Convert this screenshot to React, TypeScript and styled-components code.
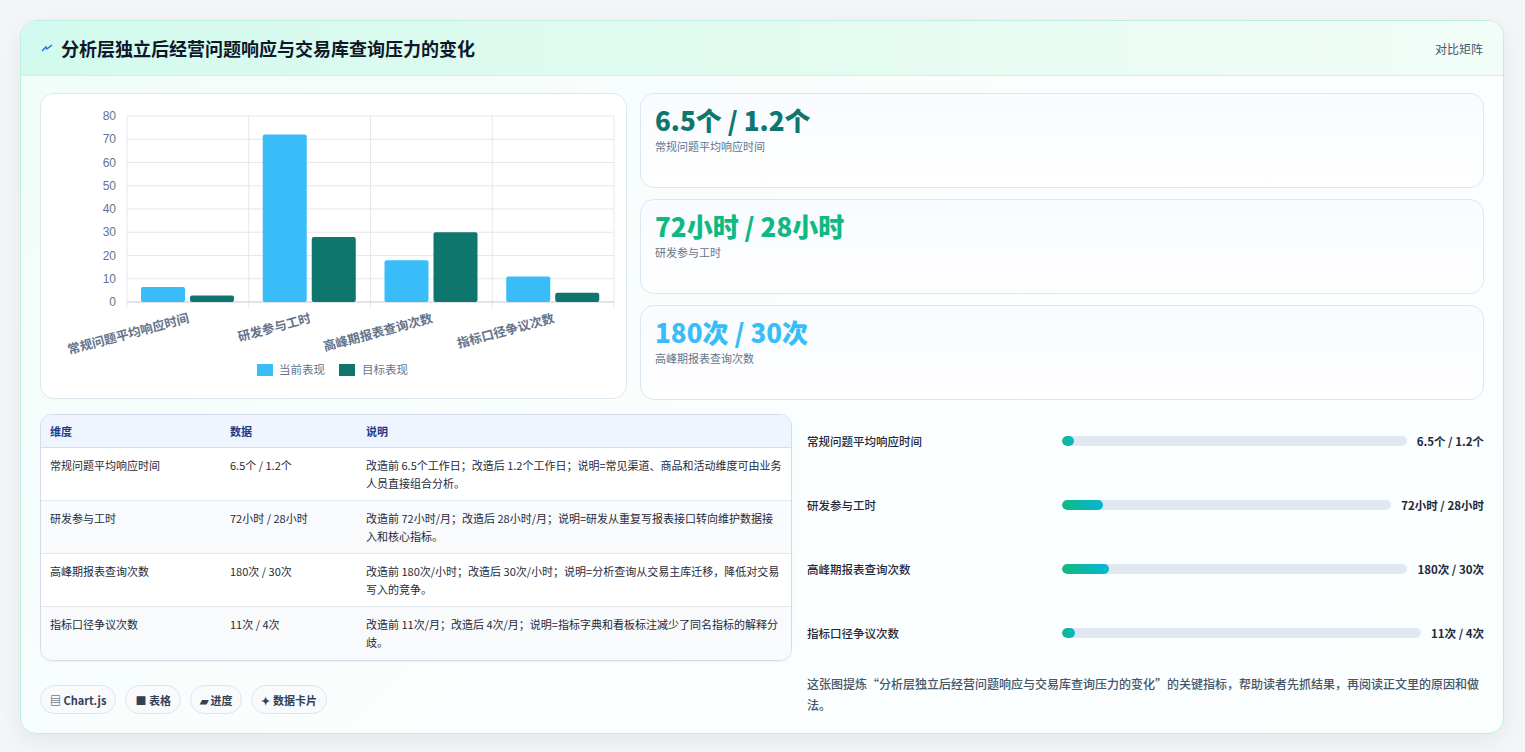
import React from "react";
import styled, { createGlobalStyle } from "styled-components";

const Global = createGlobalStyle`
  html, body { margin: 0; padding: 0; background: #f4f5f6; }
  body { font-family: "Noto Sans CJK SC", "Noto Sans", sans-serif; color: #1e293b; }
  * { box-sizing: border-box; }
`;

const Page = styled.div`
  padding: 20px 21px 22px 20px;
`;
const Shell = styled.div`
  border: 1px solid #bfeee0;
  border-radius: 16px;
  background: linear-gradient(135deg, #f0fdf9 0%, #fbfefe 50%, #fafffe 100%);
  overflow: hidden;
  box-shadow: 0 8px 24px rgba(15, 23, 42, 0.06);
`;
const Header = styled.div`
  height: 55px;
  display: flex;
  align-items: center;
  justify-content: space-between;
  padding: 0 20px 0 20px;
  background: linear-gradient(90deg, #d3faee 0%, #e2fbef 50%, #f2fdf8 100%);
  border-bottom: 1px solid #d5ecf2;
`;
const Title = styled.h1`
  margin: 0;
  font-size: 18px;
  font-weight: 700;
  color: #0f172a;
  display: flex;
  align-items: center;
  gap: 8px;
`;
const Tag = styled.span`
  font-size: 12px;
  color: #475569;
`;
const Body = styled.div`
  padding: 17px 19px 18px 19px;
  display: flex;
  flex-direction: column;
  gap: 14px;
`;
const TopRow = styled.div`
  display: grid;
  grid-template-columns: 587px 1fr;
  gap: 13px;
`;
const ChartCard = styled.div`
  height: 306px;
  background: #fff;
  border: 1px solid #dde7f0;
  border-radius: 14px;
`;
const Stats = styled.div`
  display: flex;
  flex-direction: column;
  gap: 11px;
`;
const StatCard = styled.div`
  height: 95px;
  border: 1px solid #d9e8f3;
  border-radius: 14px;
  background: linear-gradient(180deg, #f8fbff 0%, #ffffff 100%);
  padding: 8px 14px;
`;
const StatValue = styled.div<{ $c: string }>`
  font-size: 26px;
  font-weight: 800;
  color: ${(p) => p.$c};
  line-height: 36px;
`;
const StatLabel = styled.div`
  font-size: 11px;
  color: #64748b;
`;
const BottomRow = styled.div`
  display: grid;
  grid-template-columns: 752px 1fr;
  gap: 11px;
`;
const LeftCol = styled.div`
  display: flex;
  flex-direction: column;
  gap: 24px;
`;
const Table = styled.table`
  width: 100%;
  border-collapse: separate;
  border-spacing: 0;
  border: 1px solid #d3dce8;
  border-radius: 12px;
  overflow: hidden;
  font-size: 11px;
  box-shadow: 0 1px 2px rgba(0,0,0,0.05);
`;
const Th = styled.th<{ $w?: string }>`
  text-align: left;
  font-weight: 700;
  color: #1e3a8a;
  background: #eef5ff;
  padding: 0 9px;
  height: 33px;
  width: ${(p) => p.$w || "auto"};
  border-bottom: 1px solid #d3dce8;
`;
const Tr = styled.tr<{ $alt: boolean }>`
  background: ${(p) => (p.$alt ? "#f8fafc" : "#ffffff")};
  &:not(:last-child) td { border-bottom: 1px solid #e2e8f0; }
`;
const Td = styled.td`
  padding: 8px 9px 7px;
  vertical-align: top;
  color: #1e293b;
  line-height: 18px;
  height: 53px;
`;
const Chips = styled.div`
  display: flex;
  gap: 9px;
`;
const Chip = styled.span`
  height: 29px;
  padding: 0 9px;
  border: 1px solid #dde5ee;
  border-radius: 15px;
  background: #f8fafc;
  font-size: 11px;
  font-weight: 700;
  color: #334155;
  display: inline-flex;
  align-items: center;
  gap: 3px;
`;
const RightCol = styled.div`
  display: flex;
  flex-direction: column;
  margin-top: -5px;
`;
const ProgRow = styled.div`
  height: 64px;
  display: grid;
  grid-template-columns: 245px 1fr auto;
  align-items: center;
  gap: 10px;
  padding: 0 0 0 4px;
  font-size: 11.5px;
  font-weight: 500;
`;
const Track = styled.div`
  height: 10px;
  background: #e2e8f0;
  border-radius: 5px;
  overflow: hidden;
`;
const Fill = styled.div`
  height: 100%;
  border-radius: 5px;
  background: linear-gradient(90deg, #10b981, #06b6d4);
`;
const ProgVal = styled.span`
  font-weight: 700;
  color: #1e293b;
`;
const Note = styled.p`
  margin: 8px 0 0 4px;
  font-size: 12px;
  font-weight: 500;
  color: #475569;
  line-height: 21px;
`;

const cats = ["常规问题平均响应时间", "研发参与工时", "高峰期报表查询次数", "指标口径争议次数"];
const cur = [6.5, 72, 18, 11];
const tgt = [2.8, 28, 30, 4];

function Chart() {
  const L = 86, T = 22, B = 208, R = 573;
  const sy = (B - T) / 80;
  const cw = (R - L) / 4;
  return (
    <svg width="586" height="305" viewBox="0 0 586 305">
      {[0, 10, 20, 30, 40, 50, 60, 70, 80].map((v) => (
        <g key={v}>
          <line x1={L} x2={R} y1={B - v * sy} y2={B - v * sy} stroke="#e5e7eb" />
          <text x={L - 11} y={B - v * sy + 4} textAnchor="end" fontSize="12" fill="#64748b" fontFamily="Liberation Sans, sans-serif">{v}</text>
        </g>
      ))}
      {[0, 1, 2, 3, 4].map((i) => (
        <line key={i} x1={L + i * cw} x2={L + i * cw} y1={T} y2={B + 6} stroke="#e5e7eb" />
      ))}
      <line x1={L} x2={R} y1={B} y2={B} stroke="#cbd5e1" />
      {cats.map((c, i) => {
        const x0 = L + i * cw + 14;
        return (
          <g key={c}>
            <rect x={x0} y={B - cur[i] * sy} width={44} height={cur[i] * sy} rx={2} fill="#38bdf8" />
            <rect x={x0 + 49} y={B - tgt[i] * sy} width={44} height={tgt[i] * sy} rx={2} fill="#0f766e" />
            <text
              transform={`translate(${L + i * cw + cw / 2 + 2},${B + 20}) rotate(-15)`}
              textAnchor="end" fontSize="12.5" fontWeight="700" fill="#64748b"
            >{c}</text>
          </g>
        );
      })}
      <rect x={216} y={270} width={16} height={12} fill="#38bdf8" />
      <text x={238} y={280} fontSize="11.5" fill="#64748b">当前表现</text>
      <rect x={298} y={270} width={16} height={12} fill="#0f766e" />
      <text x={321} y={280} fontSize="11.5" fill="#64748b">目标表现</text>
    </svg>
  );
}

const rows = [
  ["常规问题平均响应时间", "6.5个 / 1.2个", "改造前 6.5个工作日；改造后 1.2个工作日；说明=常见渠道、商品和活动维度可由业务人员直接组合分析。"],
  ["研发参与工时", "72小时 / 28小时", "改造前 72小时/月；改造后 28小时/月；说明=研发从重复写报表接口转向维护数据接入和核心指标。"],
  ["高峰期报表查询次数", "180次 / 30次", "改造前 180次/小时；改造后 30次/小时；说明=分析查询从交易主库迁移，降低对交易写入的竞争。"],
  ["指标口径争议次数", "11次 / 4次", "改造前 11次/月；改造后 4次/月；说明=指标字典和看板标注减少了同名指标的解释分歧。"],
];
const prog = [
  ["常规问题平均响应时间", "6.5个 / 1.2个", 3.5],
  ["研发参与工时", "72小时 / 28小时", 12.5],
  ["高峰期报表查询次数", "180次 / 30次", 13.7],
  ["指标口径争议次数", "11次 / 4次", 3.5],
] as const;

export default function App() {
  return (
    <Page>
      <Global />
      <Shell>
        <Header>
          <Title>
            <svg width="12" height="12" viewBox="0 0 12 12"><path d="M1 9 L5 5 L6 7 L11 3" stroke="#2563eb" strokeWidth="1.4" fill="none" /></svg>
            分析层独立后经营问题响应与交易库查询压力的变化
          </Title>
          <Tag>对比矩阵</Tag>
        </Header>
        <Body>
          <TopRow>
            <ChartCard><Chart /></ChartCard>
            <Stats>
              <StatCard><StatValue $c="#0f766e">6.5个 / 1.2个</StatValue><StatLabel>常规问题平均响应时间</StatLabel></StatCard>
              <StatCard><StatValue $c="#10b981">72小时 / 28小时</StatValue><StatLabel>研发参与工时</StatLabel></StatCard>
              <StatCard><StatValue $c="#38bdf8">180次 / 30次</StatValue><StatLabel>高峰期报表查询次数</StatLabel></StatCard>
            </Stats>
          </TopRow>
          <BottomRow>
            <LeftCol>
              <Table>
                <thead>
                  <tr><Th $w="180px">维度</Th><Th $w="136px">数据</Th><Th>说明</Th></tr>
                </thead>
                <tbody>
                  {rows.map((r, i) => (
                    <Tr key={i} $alt={i % 2 === 1}>
                      <Td>{r[0]}</Td><Td>{r[1]}</Td><Td>{r[2]}</Td>
                    </Tr>
                  ))}
                </tbody>
              </Table>
              <Chips>
                <Chip>▤ Chart.js</Chip>
                <Chip>■ 表格</Chip>
                <Chip>▰ 进度</Chip>
                <Chip>✦ 数据卡片</Chip>
              </Chips>
            </LeftCol>
            <RightCol>
              {prog.map((p) => (
                <ProgRow key={p[0]}>
                  <span>{p[0]}</span>
                  <Track><Fill style={{ width: `${p[2]}%` }} /></Track>
                  <ProgVal>{p[1]}</ProgVal>
                </ProgRow>
              ))}
              <Note>这张图提炼“分析层独立后经营问题响应与交易库查询压力的变化”的关键指标，帮助读者先抓结果，再阅读正文里的原因和做法。</Note>
            </RightCol>
          </BottomRow>
        </Body>
      </Shell>
    </Page>
  );
}
